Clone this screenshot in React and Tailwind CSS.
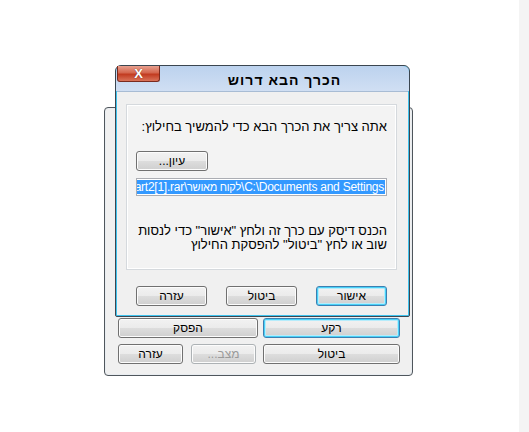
import React from 'react';

const font = { fontFamily: '"Liberation Sans", "DejaVu Sans", sans-serif' };

function Btn({ children, focused, disabled, className = '' }) {
    return (
        <div
            className={
                'flex items-center justify-center rounded-[3px] border text-[12px] leading-none ' +
                (focused
                    ? 'border-[#3c7fb1] shadow-[inset_0_0_0_1px_#48d1f8,inset_0_0_0_2px_#b6ecfb] '
                    : 'border-[#707070] shadow-[inset_0_0_0_1px_#fcfcfc] ') +
                (disabled ? 'text-[#9a9a9a] border-[#adb2b5] ' : 'text-black ') +
                'bg-[linear-gradient(#f2f2f2_0%,#ebebeb_50%,#dddddd_51%,#cfcfcf_100%)] ' +
                className
            }
        >
            {children}
        </div>
    );
}

export default function App() {
    return (
        <div className="relative h-[432px] w-[529px] overflow-hidden bg-white" style={font} dir="rtl">
            {/* right edge strip */}
            <div className="absolute right-0 top-0 h-full w-[10px] bg-[#f4f4f4]" />

            {/* back window */}
            <div className="absolute left-[104px] top-[107px] flex h-[269px] w-[309px] flex-col justify-end rounded-[4px] border border-[#4f565c] bg-[#f0f0f0] px-[12px] pb-[11px] shadow-[inset_0_0_0_1px_#e8ecf0]">
                <div className="flex gap-[5px]">
                    <Btn focused className="h-[20px] w-[137px]">רקע</Btn>
                    <Btn className="h-[20px] w-[140px]">הפסק</Btn>
                </div>
                <div className="mt-[6px] flex gap-[7px]">
                    <Btn className="h-[20px] w-[137px]">ביטול</Btn>
                    <div className="flex gap-[8px]">
                        <Btn disabled className="h-[20px] w-[65px]">מצב...</Btn>
                        <Btn className="h-[20px] w-[65px]">עזרה</Btn>
                    </div>
                </div>
            </div>

            {/* front dialog */}
            <div className="absolute left-[115px] top-[65px] flex h-[252px] w-[295px] flex-col rounded-t-[6px] rounded-b-[2px] border border-[#3b4650] bg-[#c4d8ef] shadow-[inset_0_0_0_1px_#3fc3ee]">
                {/* title bar */}
                <div className="flex h-[25px] shrink-0 rounded-t-[6px] bg-[linear-gradient(#bcd2ee,#d0dff3)]" dir="ltr">
                    <div className="ml-[1px] flex h-[16px] w-[43px] items-center justify-center rounded-b-[3px] border border-t-0 border-[#7a2a1e] bg-[linear-gradient(#e8a08f_0%,#d4664e_45%,#c23b20_55%,#d9735a_100%)]">
                        <span className="text-[13px] font-bold leading-none text-white [text-shadow:0_0_1px_#5a1408]">X</span>
                    </div>
                    <div className="flex flex-1 items-center justify-center pt-[3px] text-[14px] font-bold tracking-[1px] text-black" dir="rtl">
                        הכרך הבא דרוש
                    </div>
                </div>

                {/* client area */}
                <div className="mx-[1px] mb-[1px] flex flex-1 flex-col border-t border-[#a8bcd4] bg-[#f0f0f0] pl-[9px] pr-[11px] pt-[12px]">
                    <div className="flex h-[166px] flex-col border border-[#d5d9dd] bg-[#f3f3f3] px-[9px] shadow-[inset_0_0_0_1px_#ffffff]">
                        <div className="mt-[14px] text-[13px] leading-[15px] text-black">
                            אתה צריך את הכרך הבא כדי להמשיך בחילוץ:
                        </div>
                        <div className="mt-[17px] flex justify-end">
                            <Btn className="h-[20px] w-[72px]">עיון...</Btn>
                        </div>
                        <div className="mt-[7px] flex h-[18px] items-center justify-end overflow-hidden border border-[#abadb3] bg-white p-[1px]" dir="ltr">
                            <span className="whitespace-nowrap bg-[#3399ff] px-[1px] text-[12px] leading-[14px] tracking-[-0.25px] text-white">
                                art2[1].rar\<span className="text-[11px]">לקוח מאושר</span>\C:\Documents and Settings
                            </span>
                        </div>
                        <div className="mt-[28px] text-[13px] leading-[14px] text-black">
                            הכנס דיסק עם כרך זה ולחץ "אישור" כדי לנסות
                            <br />
                            שוב או לחץ "ביטול" להפסקת החילוץ
                        </div>
                    </div>
                    <div className="mt-[16px] flex gap-[19px] px-[10px]">
                        <Btn focused className="h-[20px] w-[71px]">אישור</Btn>
                        <Btn className="h-[20px] w-[71px]">ביטול</Btn>
                        <Btn className="h-[20px] w-[71px]">עזרה</Btn>
                    </div>
                </div>
            </div>
        </div>
    );
}
